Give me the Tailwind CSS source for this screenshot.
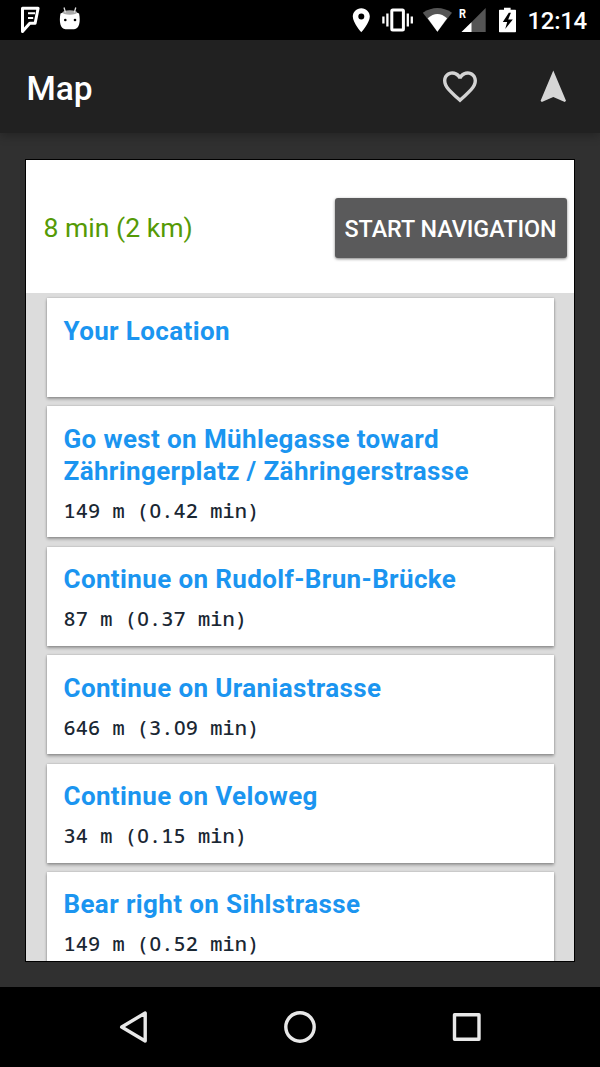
<!DOCTYPE html>
<html lang="en">
<head>
<meta charset="utf-8">
<title>Map</title>
<script src="https://cdn.jsdelivr.net/npm/@tailwindcss/browser@4"></script>
</head>
<body class="bg-black">
<div class="flex h-[1067px] w-[600px] flex-col overflow-hidden bg-[#303030] font-['Roboto',sans-serif]">
  <header class="flex h-10 shrink-0 items-center bg-black text-white">
    <svg class="h-10 w-[120px]" viewBox="0 0 120 40" fill="none">
      <path d="M22.500 8.200h15.600l-3 15h-5.300l-7.300 8.300z" stroke="#fff" stroke-width="3" stroke-linejoin="round"/>
      <path d="M35 13.300h-7M28 18h5.200" stroke="#fff" stroke-width="2"/>
      <path d="M60.500 13.500q9.500-4.500 18.600 0c1.600 8 .3 15.200-5 15.800h-8.600c-5.300-.6-6.600-7.800-5-15.800z" fill="#fff"/>
      <ellipse cx="69.800" cy="12.500" rx="7.500" ry="2.200" fill="#aaa"/>
      <path d="M65.500 12.500l-1.500-5M74.300 12.500l1.500-5" stroke="#ddd" stroke-width="1.300"/>
      <circle cx="65.300" cy="20" r="1.300" fill="#000"/><circle cx="75" cy="20" r="1.300" fill="#000"/>
    </svg>
    <svg class="ml-[220px] h-10 w-[180px]" viewBox="340 0 180 40" fill="none">
      <path fill="#fff" fill-rule="evenodd" d="M361.300 8.200c-4.800 0-8.500 3.700-8.500 8.400 0 6.300 8.500 15.700 8.500 15.700s8.500-9.400 8.500-15.700c0-4.700-3.700-8.400-8.500-8.400zm0 5.400a3 3 0 1 1 0 6 3 3 0 0 1 0-6z"/>
      <rect x="391.800" y="9.900" width="11.600" height="20" rx="1" stroke="#fff" stroke-width="3"/>
      <path d="M387.400 13.500v13M383.400 16.500v7M407.800 13.500v13M411.800 16.500v7" stroke="#fff" stroke-width="2.300"/>
      <path d="M422.800 12.700q14.600-9.200 29.200 0L437.400 31.800z" fill="#555"/>
      <path d="M427.700 18.200q9.700-8.600 19.400 0L437.400 31.800z" fill="#fff"/>
      <path d="M485.700 8v24h-24z" fill="#555"/><path d="M471.500 22.200V32h-10z" fill="#fff"/>
      <path fill="#fff" d="M504 7.800h6.600v1.900h4.700c.4 0 .7.300.7.700v21.200c0 .4-.3.700-.7.700h-15.600c-.4 0-.7-.3-.7-.7V10.400c0-.4.300-.7.700-.7h4.300z"/>
      <path fill="#000" d="M508.800 12.800l-6 9.300h4.400l-2 7 7.600-9.500h-4.600l2.700-6.800z"/>
      <path d="M471.500 8h-9l-1 11h10z" fill="#000"/>
      <text x="459" y="18.300" fill="#fff" font-family="Roboto" font-size="13.500" font-weight="700" textLength="7" lengthAdjust="spacingAndGlyphs">R</text>
    </svg>
    <span class="ml-[7.500px] pt-px text-[24px] leading-none font-medium tracking-[-0.3px]">12:14</span>
  </header>
  <nav class="z-10 flex h-[93px] shrink-0 items-center bg-[#212121] shadow-[0_3px_9px_rgba(0,0,0,0.25)]">
    <h1 class="ml-[26.500px] pt-[3.500px] text-[33.500px] leading-none font-medium text-white">Map</h1>
    <svg class="ml-auto h-[93px] w-[180px]" viewBox="420 40 180 93">
      <path transform="translate(439.600 66.200) scale(1.700)" fill="#d3d3d3" d="M16.500 3c-1.740 0-3.410.81-4.500 2.090C10.910 3.810 9.240 3 7.500 3 4.420 3 2 5.420 2 8.500c0 3.780 3.400 6.860 8.550 11.540L12 21.350l1.450-1.320C18.600 15.360 22 12.280 22 8.500 22 5.420 19.580 3 16.500 3zm-4.400 15.550l-.1.100-.1-.1C7.140 14.240 4 11.390 4 8.500 4 6.500 5.500 5 7.500 5c1.540 0 3.040.99 3.570 2.360h1.870C13.460 5.990 14.960 5 16.500 5c2 0 3.500 1.500 3.500 3.500 0 2.890-3.140 5.740-7.900 10.050z"/>
      <path fill="#d6d6d6" d="M553.300 70.500l12.700 30.200-1.200 1.200-11.500-5-11.500 5-1.200-1.200z"/>
    </svg>
  </nav>
  <main class="mx-[25px] mt-[26px] flex h-[803px] flex-col overflow-hidden border border-black bg-[#dcdcdc]">
    <section class="flex h-[133px] shrink-0 items-center justify-between bg-white pr-[7.500px] pl-[17.500px]">
      <p class="pt-[3px] text-[26.600px] leading-none text-[#559a06]">8 min (2 km)</p>
      <button class="mt-0.5 h-[60px] w-[232px] rounded-[3px] bg-[#5a5a5b] pt-1 text-[23.300px] leading-none font-medium whitespace-nowrap text-white shadow-[0_1px_3px_rgba(0,0,0,0.5)]">START NAVIGATION</button>
    </section>
    <ol id="steps" class="flex flex-col gap-[9.400px] px-[20.500px] pt-[5px]"></ol>
  </main>
  <footer class="mt-[25px] h-20 shrink-0 bg-black">
    <svg class="h-20 w-full" viewBox="0 987 600 80" fill="none" stroke="#e8e8e8" stroke-width="3.400" stroke-linejoin="round">
      <path d="M145.200 1013v28l-23.500-14z"/><circle cx="300" cy="1027" r="14.200"/><rect x="454.500" y="1014.800" width="24.500" height="24.500"/>
    </svg>
  </footer>
</div>
<script>
const steps = [
  ["Your Location", ""],
  ["Go west on Mühlegasse toward<br>Zähringerplatz / Zähringerstrasse", "149 m (0.42 min)"],
  ["Continue on Rudolf-Brun-Brücke", "87 m (0.37 min)"],
  ["Continue on Uraniastrasse", "646 m (3.09 min)"],
  ["Continue on Veloweg", "34 m (0.15 min)"],
  ["Bear right on Sihlstrasse", "149 m (0.52 min)"]
];
// Zeros are set in Noto Sans, whose zero has no slash, in a cell of the monospace advance.
const plainZeros = s => s.replace(/0/g, `<span class="inline-block w-[12.240px] text-center font-['Noto_Sans',sans-serif] leading-none tracking-normal">0</span>`);
document.getElementById("steps").innerHTML = steps.map(([title, info], i) => `
  <li class="${i === 1 ? "h-[131px]" : "h-[99px]"} shrink-0 bg-white px-[17px] pt-[16.500px] shadow-[0_2px_3px_rgba(0,0,0,0.32),0_0_2px_rgba(0,0,0,0.2)]">
    <h2 class="text-[26px] leading-[32px] font-bold tracking-[0.370px] whitespace-nowrap text-[#1b95f0]">${title}</h2>
    <p class="mt-2 font-['Noto_Sans_Mono','DejaVu_Sans_Mono',monospace] text-[20.300px] leading-[30px] font-medium tracking-[0.060px] whitespace-pre text-[#1a2733]">${plainZeros(info)}</p>
  </li>`).join("");
</script>
</body>
</html>
